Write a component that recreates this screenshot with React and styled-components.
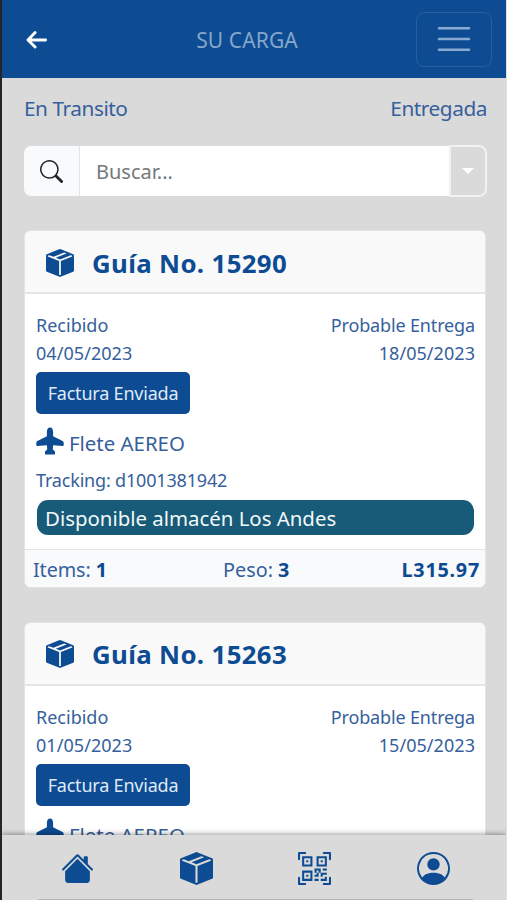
import React from "react";
import styled, { createGlobalStyle } from "styled-components";
import { BsSearch, BsBoxSeamFill, BsHouseFill, BsQrCodeScan, BsPersonCircle } from "react-icons/bs";

const guias = [
    { numero: "15290", recibido: "04/05/2023", entrega: "18/05/2023", flete: "AEREO", tracking: "d1001381942", estado: "Disponible almacén Los Andes", items: 1, peso: 3, total: "L315.97" },
    { numero: "15263", recibido: "01/05/2023", entrega: "15/05/2023", flete: "AEREO", tracking: "d1001381942", estado: "Disponible almacén Los Andes", items: 1, peso: 3, total: "L315.97" },
]

const Avion=()=>(
    <svg width="28" height="28" viewBox="0 0 28 28" fill="currentColor">
        <path d="M14 .5C12 .5 10.9 2.6 10.9 5V9.3L1.4 14Q.3 14.7 .3 16V18.2Q.4 19.2 1.4 19L10.9 18.2L11.2 22.6L9 24.5V27.4H19V24.5L16.8 22.6L17.1 18.2L26.6 19Q27.6 19.2 27.7 18.2V16Q27.7 14.7 26.6 14L17.1 9.3V5C17.1 2.6 16 .5 14 .5Z"/>
    </svg>
)

const Guia=({ guia })=>{

    return(
        <Card>
            <CardHeader>
                <BsBoxSeamFill size={28}/>
                <CardTitle>Guía No. {guia.numero}</CardTitle>
            </CardHeader>
            <CardBody>
                <Fechas>
                    <Texto $size={18} $track={0}>Recibido</Texto>
                    <Texto $size={18} $track={-0.15}>Probable Entrega</Texto>
                </Fechas>
                <Fechas>
                    <Texto $size={18} $track={0.05}>{guia.recibido}</Texto>
                    <Texto $size={18} $track={0.05}>{guia.entrega}</Texto>
                </Fechas>
                <Factura>Factura Enviada</Factura>
                <Flete>
                    <Avion/>
                    <Texto $size={20.4} $track={0}>Flete {guia.flete}</Texto>
                </Flete>
                <Tracking>
                    <Texto $size={18} $track={-0.18}>Tracking: {guia.tracking}</Texto>
                </Tracking>
                <Estado>{guia.estado}</Estado>
            </CardBody>
            <CardFooter>
                <Texto $size={19.8} $track={-0.1}>Items: <b>{guia.items}</b></Texto>
                <Peso $size={19.8} $track={0}>Peso: <b>{guia.peso}</b></Peso>
                <Texto $size={19.8} $track={0.75}><b>{guia.total}</b></Texto>
            </CardFooter>
        </Card>
    )
}

const App=()=>{

    return(
        <Pantalla>
            <GlobalStyle/>
            <Header>
                <BotonVolver aria-label="Volver">
                    <svg width="22" height="20" viewBox="0 0 22 20" fill="none" stroke="currentColor" strokeWidth="2.9" strokeLinecap="round" strokeLinejoin="round">
                        <path d="M19.6 10H2.4M9.1 2.6L2 10L9.1 17"/>
                    </svg>
                </BotonVolver>
                <Titulo>SU CARGA</Titulo>
                <BotonMenu aria-label="Menu">
                    <svg width="35" height="28" viewBox="0 0 35 28" stroke="currentColor" strokeWidth="2.6" strokeLinecap="round">
                        <path d="M3 3.2H33M3 14H33M3 24.8H33"/>
                    </svg>
                </BotonMenu>
            </Header>
            <Contenido>
                <Tabs>
                    <Texto $size={20.8} $track={-0.45}>En Transito</Texto>
                    <Texto $size={20.8} $track={-0.45}>Entregada</Texto>
                </Tabs>
                <Buscador>
                    <BuscadorIcono><BsSearch size={23}/></BuscadorIcono>
                    <BuscadorInput placeholder="Buscar..."/>
                    <BuscadorFiltro aria-label="Filtro"><Flecha/></BuscadorFiltro>
                </Buscador>
                <Lista>
                    {guias.map(guia => <Guia key={guia.numero} guia={guia}/>)}
                </Lista>
            </Contenido>
            <Menu>
                <BsHouseFill size={33}/>
                <BsBoxSeamFill size={33}/>
                <BsQrCodeScan size={33}/>
                <BsPersonCircle size={33}/>
            </Menu>
        </Pantalla>
    )
}

const GlobalStyle=createGlobalStyle`
    * {
        box-sizing: border-box;
    }
    body {
        margin: 0;
        overflow: hidden;
        font-family: "Noto Sans", "Open Sans", sans-serif;
    }
    svg {
        display: block;
        flex-shrink: 0;
    }
`
const Pantalla=styled.div`
    display: flex;
    flex-direction: column;
    height: 900px;
    overflow: hidden;
    color: #0d4c93;
    background-color: #dadada;
    border-left: 2px solid #26262a;
    border-right: 1px solid #dde4dc;
`
const Header=styled.header`
    display: flex;
    flex-shrink: 0;
    justify-content: space-between;
    align-items: center;
    height: 78px;
    padding: 0 14px 0 24px;
    background-color: #0d4c93;
`
const BotonVolver=styled.button`
    width: 52px;
    padding: 2px 0 0;
    border: none;
    background: none;
    color: #ffffff;
`
const Titulo=styled.h1`
    margin: 1px 0 0;
    font-size: 21px;
    font-weight: 400;
    letter-spacing: 0.1px;
    color: #86a6cc;
`
const BotonMenu=styled.button`
    display: flex;
    justify-content: center;
    align-items: center;
    width: 76px;
    height: 55px;
    padding: 0;
    border: 1px solid #265e9f;
    border-radius: 8px;
    background: none;
    color: #8aa9d2;
`
const Contenido=styled.main`
    flex: 1;
    min-height: 0;
    overflow: hidden;
    padding: 15px 18px 0 22px;
`
const Texto=styled.span`
    font-size: ${props => props.$size}px;
    line-height: 28px;
    letter-spacing: ${props => props.$track}px;
    white-space: pre;
    color: #36609c;

    b {
        color: #0d4a91;
    }
`
const Peso=styled(Texto)`
    padding-left: 4px;
`
const Tabs=styled.nav`
    display: flex;
    justify-content: space-between;
    height: 53px;
    padding: 1px 1px 0 0;
`
const Buscador=styled.div`
    display: flex;
    width: 463px;
    height: 50px;
`
const BuscadorIcono=styled.span`
    display: flex;
    justify-content: center;
    align-items: center;
    width: 56px;
    border-right: 1px solid #e2e4e6;
    border-radius: 7px 0 0 7px;
    background-color: #f8fafb;
    color: #212529;
`
const BuscadorInput=styled.input`
    flex: 1;
    min-width: 0;
    padding: 0 16px;
    border: none;
    outline: none;
    background-color: #ffffff;
    font-family: inherit;
    font-size: 20px;

    &::placeholder {
        color: #75787b;
    }
`
const BuscadorFiltro=styled.button`
    display: flex;
    justify-content: center;
    align-items: center;
    width: 38px;
    height: 52px;
    margin-top: -1px;
    padding: 0;
    border: 2px solid #f1f1f1;
    border-radius: 0 8px 8px 0;
    background-color: #dadada;
`
const Flecha=styled.span`
    border-top: 6px solid #ffffff;
    border-left: 6px solid transparent;
    border-right: 6px solid transparent;
`
const Lista=styled.section`
    display: flex;
    flex-direction: column;
    gap: 34px;
    padding: 34px 0 0;
`
const Card=styled.article`
    height: 357.5px;
    flex-shrink: 0;
    overflow: hidden;
    border: 1px solid #e4e4e4;
    border-radius: 7px;
    background-color: #ffffff;
    width: 462px;
`
const CardHeader=styled.div`
    display: flex;
    align-items: center;
    gap: 18px;
    height: 63px;
    padding: 2px 21px 0;
    border-bottom: 2px solid #e6e6e6;
    background-color: #f9f9f9;
`
const CardTitle=styled.h2`
    margin: 0;
    font-size: 25.8px;
    line-height: 34px;
    letter-spacing: 0.35px;
    white-space: pre;
`
const CardBody=styled.div`
    display: flex;
    flex-direction: column;
    height: 255px;
    padding: 17px 10px 0 11px;
`
const Fechas=styled.div`
    display: flex;
    justify-content: space-between;
    height: 28px;
`
const Factura=styled.button`
    align-self: flex-start;
    width: 154px;
    height: 42px;
    flex-shrink: 0;
    margin-top: 5px;
    padding: 0;
    border: none;
    border-radius: 5px;
    background-color: #0d4c93;
    color: #dfe9f6;
    font-family: inherit;
    font-size: 18px;
    letter-spacing: -0.2px;
`
const Flete=styled.div`
    display: flex;
    align-items: center;
    height: 28px;
    margin-top: 15px;
    gap: 5px;

    svg {
        margin-top: -5px;
    }
`
const Tracking=styled.div`
    height: 28px;
    margin-top: 9px;
`
const Estado=styled.div`
    flex-shrink: 0;
    width: 437px;
    height: 35px;
    margin: 6px 0 0 1px;
    padding: 0 8px;
    border-radius: 11px;
    background-color: #185b78;
    color: #f2f8fa;
    font-size: 20.4px;
    line-height: 37px;
    white-space: pre;
`
const CardFooter=styled.div`
    display: flex;
    justify-content: space-between;
    align-items: center;
    height: 38px;
    padding: 2px 5px 0 8px;
    border-top: 1px solid #e2e4e6;
    background-color: #f8fafb;
`
const Menu=styled.footer`
    position: relative;
    display: flex;
    flex-shrink: 0;
    justify-content: space-between;
    height: 65px;
    padding: 17px 56px 0 59px;
    background-color: #dadada;
    box-shadow: 0 -1px 5px rgba(0, 0, 0, 0.4);

    &::after {
        content: "";
        position: absolute;
        left: 36px;
        right: 33px;
        bottom: 0;
        height: 1px;
        background-color: #b4b5b8;
    }
`

export default App
